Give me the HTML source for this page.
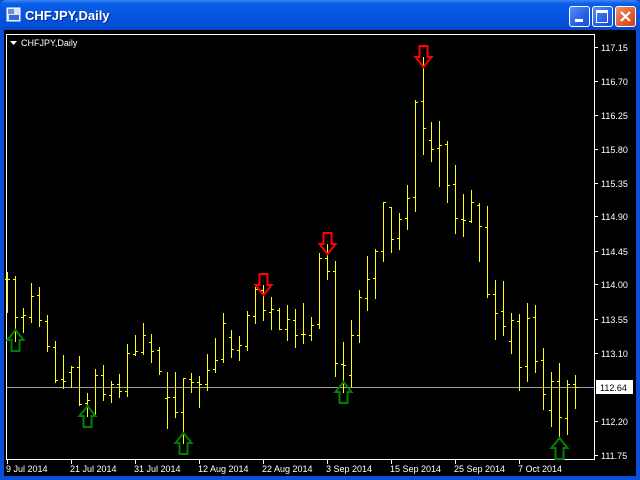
<!DOCTYPE html>
<html><head><meta charset="utf-8"><style>
html,body{margin:0;padding:0;width:640px;height:480px;overflow:hidden;background:#0a4fdc;font-family:"Liberation Sans",sans-serif}
#title{position:absolute;left:0;top:0;width:640px;height:30px;background:linear-gradient(#3d86f5 0,#0a5ee8 12%,#0454e0 50%,#0350d8 85%,#0845c8 100%);border-radius:6px 6px 0 0}
#title .t{position:absolute;left:25px;top:8px;color:#fff;font-weight:bold;font-size:13px;text-shadow:1px 1px 0 #0a2a8a}
.btn{position:absolute;top:6px;width:19px;height:19px;border:1px solid #fff;border-radius:3px;background:linear-gradient(135deg,#5a8ef8,#2560e8 60%,#1a4cd0)}
#main{position:absolute;left:4px;top:30px;width:632px;height:446px;background:#000}
svg{position:absolute;left:0;top:0}
</style></head><body>
<div id="title">
<svg width="20" height="20" style="left:5px;top:6px"><rect x="2" y="2" width="13" height="13" fill="#d8e4f8" stroke="#fff"/><rect x="4" y="9" width="10" height="5" fill="#3a6ad0"/><rect x="3" y="3" width="6" height="5" fill="#6a90d8"/></svg>
<div class="t">CHFJPY,Daily</div>
<div class="btn" style="left:569px"><div style="position:absolute;left:5px;top:12px;width:8px;height:3px;background:#fff"></div></div>
<div class="btn" style="left:592px"><div style="position:absolute;left:3px;top:3px;width:10px;height:9px;border:1px solid #fff;border-top-width:3px"></div></div>
<div class="btn" style="left:615px;background:linear-gradient(135deg,#f09070,#e05a30 60%,#c84020)"><svg width="19" height="19"><path d="M5 5L14 14M14 5L5 14" stroke="#fff" stroke-width="2.2"/></svg></div>
</div>
<div id="main"></div>
<svg width="640" height="480" font-family="Liberation Sans, sans-serif" font-size="9" fill="#fff">
<rect x="6.5" y="34.5" width="588" height="425" fill="none" stroke="#fff"/>
<path d="M7 387.5H594" stroke="#a0a0a0"/>
<path fill="none" stroke="#ffff00" d="M7.5 272V313M5 279.5h2M8 279.5h2M15.5 276V342M13 279.5h2M16 317.5h2M23.5 308V333M21 317.5h2M24 315.5h2M31.5 283V323M29 317.5h2M32 296.5h2M39.5 287V327M37 295.5h2M40 320.5h2M47.5 315V352M45 321.5h2M48 346.5h2M55.5 341V383M53 347.5h2M56 380.5h2M63.5 355V389M61 379.5h2M64 381.5h2M71.5 366V388M69 372.5h2M72 367.5h2M79.5 356V406M77 367.5h2M80 404.5h2M87.5 393V417M85 403.5h2M88 400.5h2M95.5 369V415M93 414.5h2M96 375.5h2M103.5 365V401M101 375.5h2M104 394.5h2M111.5 381V403M109 395.5h2M112 384.5h2M119.5 374V398M117 384.5h2M120 391.5h2M127.5 344V397M125 391.5h2M128 353.5h2M135.5 335V356M133 354.5h2M136 351.5h2M143.5 323V355M141 352.5h2M144 335.5h2M151.5 334V363M149 342.5h2M152 351.5h2M159.5 347V375M157 350.5h2M160 371.5h2M167.5 372V429M165 398.5h2M168 397.5h2M175.5 372V418M173 397.5h2M176 412.5h2M183.5 378V444M181 412.5h2M184 378.5h2M191.5 373V393M189 379.5h2M192 382.5h2M199.5 376V408M197 382.5h2M200 384.5h2M207.5 354V391M205 384.5h2M208 370.5h2M215.5 338V373M213 369.5h2M216 360.5h2M223.5 313V363M221 359.5h2M224 323.5h2M231.5 330V358M229 337.5h2M232 349.5h2M239.5 336V361M237 350.5h2M240 345.5h2M247.5 311V351M245 346.5h2M248 315.5h2M255.5 287V324M253 316.5h2M256 289.5h2M263.5 285V321M261 290.5h2M264 310.5h2M271.5 297V330M269 312.5h2M272 309.5h2M279.5 308V330M277 310.5h2M280 329.5h2M287.5 305V341M285 329.5h2M288 319.5h2M295.5 309V348M293 320.5h2M296 335.5h2M303.5 303V344M301 334.5h2M304 334.5h2M311.5 317V341M309 335.5h2M312 325.5h2M319.5 253V329M317 324.5h2M320 258.5h2M327.5 244V280M325 258.5h2M328 271.5h2M335.5 261V377M333 271.5h2M336 363.5h2M343.5 342V393M341 364.5h2M344 365.5h2M351.5 320V387M349 375.5h2M352 335.5h2M359.5 290V343M357 335.5h2M360 297.5h2M367.5 256V311M365 298.5h2M368 279.5h2M375.5 249V299M373 278.5h2M376 251.5h2M383.5 202V262M381 251.5h2M384 202.5h2M391.5 207V253M389 207.5h2M392 239.5h2M399.5 213V250M397 238.5h2M400 219.5h2M407.5 185V230M405 218.5h2M408 198.5h2M415.5 100V212M413 197.5h2M416 102.5h2M423.5 57V155M421 101.5h2M424 128.5h2M431.5 122V162M429 140.5h2M432 149.5h2M439.5 121V187M437 148.5h2M440 145.5h2M447.5 141V203M445 144.5h2M448 185.5h2M455.5 165V234M453 184.5h2M456 218.5h2M463.5 194V237M461 219.5h2M464 220.5h2M471.5 190V223M469 221.5h2M472 202.5h2M479.5 203V262M477 205.5h2M480 226.5h2M487.5 206V298M485 227.5h2M488 294.5h2M495.5 280V340M493 294.5h2M496 313.5h2M503.5 281V336M501 311.5h2M504 326.5h2M511.5 313V354M509 341.5h2M512 320.5h2M519.5 314V391M517 321.5h2M520 367.5h2M527.5 303V382M525 366.5h2M528 318.5h2M535.5 305V373M533 317.5h2M536 361.5h2M543.5 348V410M541 360.5h2M544 394.5h2M551.5 372V427M549 410.5h2M552 381.5h2M559.5 363V440M557 381.5h2M560 417.5h2M567.5 380V435M565 418.5h2M568 384.5h2M575.5 375V409M573 384.5h2M576 387.5h2"/>
<g fill="none" stroke="#008000" stroke-width="2">
<polygon transform="translate(15.5,330)" points="0,0 8,10 4,10 4,21 -4,21 -4,10 -8,10"/>
<polygon transform="translate(87.5,406)" points="0,0 8,10 4,10 4,21 -4,21 -4,10 -8,10"/>
<polygon transform="translate(183.5,433)" points="0,0 8,10 4,10 4,21 -4,21 -4,10 -8,10"/>
<polygon transform="translate(343.5,382)" points="0,0 8,10 4,10 4,21 -4,21 -4,10 -8,10"/>
<polygon transform="translate(559.5,438)" points="0,0 8,10 4,10 4,21 -4,21 -4,10 -8,10"/>
</g>
<g fill="none" stroke="#ff0000" stroke-width="2">
<polygon transform="translate(263.5,295)" points="0,0 8,-10 4,-10 4,-21 -4,-21 -4,-10 -8,-10"/>
<polygon transform="translate(327.5,254)" points="0,0 8,-10 4,-10 4,-21 -4,-21 -4,-10 -8,-10"/>
<polygon transform="translate(423.5,67)" points="0,0 8,-10 4,-10 4,-21 -4,-21 -4,-10 -8,-10"/>
</g>
<path d="M10 41h7l-3.5 4z" fill="#fff"/>
<text x="21" y="46">CHFJPY,Daily</text>
<path stroke="#fff" d="M595 47.5h3M595 81.5h3M595 115.5h3M595 149.5h3M595 183.5h3M595 216.5h3M595 251.5h3M595 284.5h3M595 319.5h3M595 353.5h3M595 421.5h3M595 455.5h3M7.5 460v4M71.5 460v4M135.5 460v4M199.5 460v4M263.5 460v4M327.5 460v4M391.5 460v4M455.5 460v4M519.5 460v4"/>
<g>
<text x="601" y="51">117.15</text><text x="601" y="85">116.70</text><text x="601" y="119">116.25</text><text x="601" y="153">115.80</text><text x="601" y="187">115.35</text><text x="601" y="220">114.90</text><text x="601" y="255">114.45</text><text x="601" y="288">114.00</text><text x="601" y="323">113.55</text><text x="601" y="357">113.10</text><text x="601" y="425">112.20</text><text x="601" y="459">111.75</text>
</g>
<rect x="596" y="380" width="37" height="14" fill="#fff"/>
<text x="600" y="391" fill="#000">112.64</text>
<g>
<text x="6" y="472">9 Jul 2014</text><text x="70" y="472">21 Jul 2014</text><text x="134" y="472">31 Jul 2014</text><text x="198" y="472">12 Aug 2014</text><text x="262" y="472">22 Aug 2014</text><text x="326" y="472">3 Sep 2014</text><text x="390" y="472">15 Sep 2014</text><text x="454" y="472">25 Sep 2014</text><text x="518" y="472">7 Oct 2014</text>
</g>
</svg>
</body></html>
